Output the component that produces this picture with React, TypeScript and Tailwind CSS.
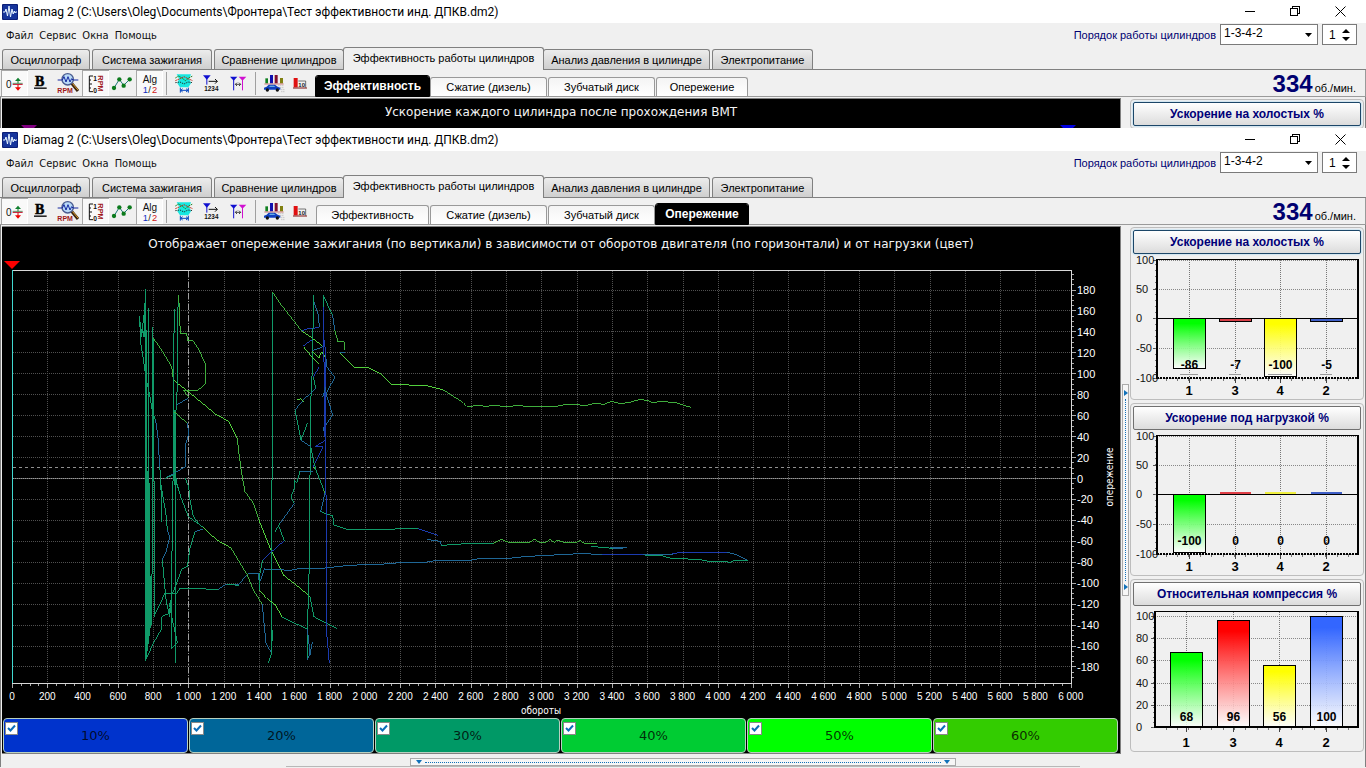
import React, { useId } from "react";

const UI = "font-['Liberation_Sans',sans-serif]";

/* ---------- window chrome ---------- */

function AppIcon() {
  return (
    <svg className="size-4 shrink-0" viewBox="0 0 16 16" aria-hidden="true">
      <rect width="16" height="16" rx="1" fill="#0c1f78" />
      <rect x="1" y="1" width="14" height="14" rx="1" fill="#16349b" />
      <path d="M1 8h2l1-3 1.500 7L7 2l1.500 11L10 5l1.200 5L12.300 7l.7 2 .5-1H15" fill="none" stroke="#e6f4ff" strokeWidth="1" />
    </svg>
  );
}

function TitleBar() {
  return (
    <header className="flex h-[23px] items-center bg-white pl-[2px]">
      <AppIcon />
      <h1 className="ml-[5px] flex-1 truncate font-['Roboto','Open_Sans',sans-serif] text-[12px] leading-[18px] text-black">
        Diamag 2 (C:\Users\Oleg\Documents\Фронтера\Тест эффективности инд. ДПКВ.dm2)
      </h1>
      <div className="flex pr-[3px] text-black">
        <button aria-label="Свернуть" className="flex h-5 w-[45px] items-center justify-center">
          <svg className="size-[11px]" viewBox="0 0 11 11" stroke="currentColor" fill="none" shapeRendering="crispEdges"><path d="M0 5.500H10" /></svg>
        </button>
        <button aria-label="Восстановить" className="flex h-5 w-[45px] items-center justify-center">
          <svg className="size-[11px]" viewBox="0 0 11 11" stroke="currentColor" fill="none" shapeRendering="crispEdges"><path d="M.5 2.500h7v7h-7zM2.500 2.500v-2h7v7h-2" /></svg>
        </button>
        <button aria-label="Закрыть" className="flex h-5 w-[45px] items-center justify-center">
          <svg className="size-[11px]" viewBox="0 0 11 11" stroke="currentColor" fill="none"><path d="M.5.5l10 10M10.500.5l-10 10" /></svg>
        </button>
      </div>
    </header>
  );
}

function MenuRow() {
  const id = useId();
  return (
    <div className="flex h-[24px] items-start pt-px">
      <nav className="flex flex-1 gap-[6px] pl-[6px] pt-[3px] font-['DejaVu_Sans_Condensed','DejaVu_Sans',sans-serif] text-[11px] leading-[18px] text-[#111]">
        {["Файл", "Сервис", "Окна", "Помощь"].map((m) => (
          <button key={m}>{m}</button>
        ))}
      </nav>
      <label htmlFor={id} className="mr-[4px] pt-[2px] text-[11px] leading-[18px] text-[#000070]">Порядок работы цилиндров</label>
      <div className="relative mr-[4px]">
        <select id={id} className="block h-[21px] w-[98px] appearance-none border border-[#7a7a7a] bg-white pb-[2px] pl-[3px] text-[12px] leading-[17px] text-black">
          <option>1-3-4-2</option>
        </select>
        <svg className="pointer-events-none absolute right-[6px] top-[9px] h-[4px] w-[7px]" viewBox="0 0 7 4" aria-hidden="true"><path d="M0 0h7L3.500 4z" /></svg>
      </div>
      <div className="mr-[9px] flex h-[21px] w-[35px] items-center border border-[#7a7a7a] bg-white">
        <input aria-label="Номер цилиндра" defaultValue="1" className="w-[17px] bg-white pl-[6px] text-[12px] text-black" />
        <div className="flex flex-col gap-[4px] pl-[2px]">
          <button aria-label="Больше" className="block"><svg className="h-[4px] w-[8px]" viewBox="0 0 8 4"><path d="M0 4h8L4 0z" /></svg></button>
          <button aria-label="Меньше" className="block"><svg className="h-[4px] w-[8px]" viewBox="0 0 8 4"><path d="M0 0h8L4 4z" /></svg></button>
        </div>
      </div>
    </div>
  );
}

const mainTabs = [
  { label: "Осциллограф", w: "w-[88px]" },
  { label: "Система зажигания", w: "w-[120px]" },
  { label: "Сравнение цилиндров", w: "w-[130px]" },
  { label: "Эффективность работы цилиндров", w: "w-[201px]" },
  { label: "Анализ давления в цилиндре", w: "w-[167px]" },
  { label: "Электропитание", w: "w-[101px]" },
];

function MainTabs() {
  return (
    <div className="flex h-[23px] items-end border-b border-[#808080] pl-[2px]">
      {mainTabs.map((t, i) =>
        i === 3 ? (
          <button key={t.label} className={`${t.w} -ml-[3px] -mr-px -mb-px h-[23px] shrink-0 whitespace-nowrap rounded-t-[3px] border border-b-0 border-[#808080] bg-[#f0f0f0] pb-[2px] text-[11px] leading-[16px] text-black`}>
            {t.label}
          </button>
        ) : (
          <button key={t.label} className={`${t.w} mr-[2px] h-[20px] shrink-0 whitespace-nowrap rounded-t-[3px] border border-b-0 border-[#808080] bg-linear-to-b from-[#ececec] to-[#cfcfcf] text-[11px] leading-[16px] text-black`}>
            {t.label}
          </button>
        )
      )}
    </div>
  );
}

/* ---------- toolbar ---------- */

function Tool({ label, x, pressed, children }: { label: string; x: number; pressed?: boolean; children: React.ReactNode }) {
  return (
    <button aria-label={label} className={`h-[26px] w-[27px] shrink-0 ${pressed ? "bg-[#f9f9f9] shadow-[inset_1px_1px_0_#a8a8a8,inset_-1px_-1px_0_#ffffff]" : ""}`}>
      <svg className="block h-[26px] w-[27px]" viewBox={`${x} 210 81 78`} fill="none" fontFamily="Liberation Sans, sans-serif">
        {children}
      </svg>
    </button>
  );
}

function Separator() {
  return <span className="mx-[3px] h-[23px] w-px shrink-0 bg-[#a0a0a0]" />;
}

function Toolbar() {
  return (
    <div className="flex items-center pl-px">
      <Tool label="Ноль" x={3} pressed>
        <text x="18" y="265" fontSize="30" fill="#111">0</text>
        <path d="M38 253H68" stroke="#c00020" strokeWidth="3" />
        <path d="M38 250H68" stroke="#207030" strokeWidth="2" />
        <path d="M54 250V240" stroke="#108030" strokeWidth="3" /><path d="M45 243L54 233L63 243Z" fill="#108030" />
        <path d="M54 254V264" stroke="#d00" strokeWidth="3" /><path d="M45 262L54 272L63 262Z" fill="#f00000" />
      </Tool>
      <Tool label="Жирные линии" x={84}>
        <text x="105" y="257" fontSize="42" fontWeight="bold" fontFamily="Liberation Serif, serif" fill="#000" stroke="#000" strokeWidth="1.500">B</text>
        <path d="M102 264.500H140" stroke="#000" strokeWidth="4" />
      </Tool>
      <Tool label="Обороты" x={165}>
        <path d="M215 250L234 273" stroke="#3a2410" strokeWidth="9" /><path d="M217 250L234 270" stroke="#e0a030" strokeWidth="3" />
        <circle cx="203" cy="238" r="17" fill="#b9daf8" stroke="#4a5c90" strokeWidth="4" />
        <path d="M173 240H187L192 230L198 246L204 230L210 246L215 236L219 240H235" stroke="#1428a0" strokeWidth="3" />
        <text x="172" y="279" fontSize="21" fontWeight="bold" fill="#a01818">RPM</text>
      </Tool>
      <Tool label="Шкала оборотов" x={246} pressed>
        <path d="M279 228H268V275H279M268 240H273M268 252H276M268 264H273" stroke="#111" strokeWidth="3" />
        <text x="280" y="242" fontSize="20" fontWeight="bold" fill="#111">1</text><text x="280" y="278" fontSize="20" fontWeight="bold" fill="#111">0</text>
        <text transform="translate(294 226) rotate(90)" fontSize="22" fontWeight="bold" fill="#a01820">RPM</text>
      </Tool>
      <Tool label="Точки" x={327}>
        <path d="M342 264L358 238L371 256L389 238" stroke="#207878" strokeWidth="3" />
        {[[342, 264], [358, 238], [371, 257], [389, 238]].map(([a, b]) => <circle key={a} cx={a} cy={b} r="6.500" fill="#0b7a1c" />)}
      </Tool>
      <Tool label="Алгоритм" x={408} pressed>
        <text x="428" y="249" fontSize="30" fill="#111">Alg</text>
        <text x="428" y="279" fontSize="28" fill="#1030c0">1</text><text x="445" y="279" fontSize="28" fill="#111">/</text><text x="456" y="279" fontSize="28" fill="#d01818">2</text>
      </Tool>
      <Separator />
      <span className="w-px" />
      <Tool label="Диапазон" x={513}>
        <path d="M530 223H573L568 236L573 250L565 262H540L532 250L537 236Z" fill="#18e8e0" />
        <path d="M526 234L536 228L546 234L556 242L566 234L578 228" stroke="#208020" strokeWidth="3" strokeDasharray="5 2" />
        <path d="M526 242L540 236L552 230L564 236L578 242" stroke="#c03020" strokeWidth="3" strokeDasharray="5 2" />
        <path d="M526 248L540 246L552 252L564 246L578 248" stroke="#203030" strokeWidth="3" strokeDasharray="4 3" />
        <path d="M541 263V278M565 263V278M541 271H565M548 266L542 271L548 276M558 266L564 271L558 276" stroke="#0848c0" strokeWidth="3" />
      </Tool>
      <Tool label="Порядок цилиндров" x={594}>
        <path d="M609 226H632L620.500 239Z" fill="#1010d0" /><path d="M620.500 232V254" stroke="#1010d0" strokeWidth="3" />
        <path d="M626 244H652M645 237L652 244L645 251" stroke="#111" strokeWidth="3" />
        <text x="613" y="273" fontSize="19" fontWeight="bold" fill="#111">1234</text>
      </Tool>
      <Tool label="Интервал" x={675}>
        <path d="M690 230H712L701 242Z" fill="#1010d0" /><path d="M701 236V271" stroke="#1010d0" strokeWidth="3" />
        <path d="M716 230H739L727.500 242Z" fill="#d010d0" /><path d="M727.500 236V271" stroke="#d010d0" strokeWidth="3" />
        <path d="M706 253H722M711 248L706 253L711 258M717 248L722 253L717 258" stroke="#222" strokeWidth="2.500" />
      </Tool>
      <Separator />
      <Tool label="Под нагрузкой" x={774}>
        <path d="M793 235h8v15h-8z" fill="#108020" /><path d="M807 225h9v25h-9z" fill="#1010b0" /><path d="M821 225h9v25h-9z" fill="#801030" /><path d="M837 234h9v16h-9z" fill="#808010" />
        <path d="M790 252H848" stroke="#c04040" strokeWidth="2" />
        <path d="M789 269V263L797 260L803 254H822L830 260L838 263V269Z" fill="#1040c0" /><path d="M804 260L807 257H819L823 260Z" fill="#80d0f0" />
        <circle cx="799" cy="270" r="5" fill="#111" /><circle cx="829" cy="270" r="5" fill="#111" />
        <path d="M832 257H850M838 263H850M841 269H850M841 275H850" stroke="#999" strokeWidth="2" strokeDasharray="3 3" />
      </Tool>
      <Tool label="Десятка" x={855}>
        <path d="M878 234h12v28h-12z" fill="#e01010" /><path d="M876 264H918" stroke="#801010" strokeWidth="3" />
        <path d="M892 243H914V263" stroke="#333" strokeWidth="2" />
        <text x="892" y="261" fontSize="18" fontWeight="bold" fill="#222">10</text>
      </Tool>
    </div>
  );
}

const subTabs = [
  { label: "Эффективность", w: "w-[113px]" },
  { label: "Сжатие (дизель)", w: "w-[117px]" },
  { label: "Зубчатый диск", w: "w-[107px]" },
  { label: "Опережение", w: "w-[92px]" },
];

function ToolRow({ active }: { active: number }) {
  return (
    <div className="flex h-[27px] items-stretch border-b border-r border-[#9a9a9a]">
      <Toolbar />
      <div className="flex flex-1 items-end pl-[3px]">
        {subTabs.map((t, i) =>
          i === active ? (
            <button key={t.label} className={`${t.w} mr-px h-[20px] shrink-0 whitespace-nowrap rounded-t-[2px] bg-black text-[12px] font-bold leading-[18px] text-white outline-1 outline-black`}>{t.label}</button>
          ) : (
            <button key={t.label} className={`${t.w} mr-px h-[19px] shrink-0 whitespace-nowrap rounded-t-[3px] border border-b-0 border-[#999] bg-linear-to-b from-[#f4f4f4] to-white text-[11px] leading-[16px] text-black`}>{t.label}</button>
          )
        )}
      </div>
      <p className="flex items-baseline gap-[2px] pr-[9px] text-black">
        <strong className="text-[24px] leading-[28px] text-[#000070]">334</strong>
        <span className="text-[11px]">об./мин.</span>
      </p>
    </div>
  );
}

/* ---------- side bar charts ---------- */

type Bar = { x: number; w: number; top: number; bottom: number; color: string; value: string; cyl: string; thin?: boolean };
type Side = { title: string; left: number; oy: number; top: number; bottom: number; ticks: [string, number][]; zero: number; bars: Bar[]; minor: number };

const G = "#00ff00", R = "#ff0000", Y = "#ffff00", B = "#3366ff";

const idle: Side = {
  title: "Ускорение на холостых %", left: 1157, oy: 254, top: 260, bottom: 378, zero: 318, minor: 6,
  ticks: [["100", 260], ["50", 289], ["0", 318], ["-50", 348], ["-100", 378]],
  bars: [
    { x: 1189, w: 32, top: 318, bottom: 368, color: G, value: "-86", cyl: "1" },
    { x: 1235, w: 32, top: 318, bottom: 321, color: "#d84048", value: "-7", cyl: "3", thin: true },
    { x: 1280, w: 32, top: 318, bottom: 376, color: Y, value: "-100", cyl: "4" },
    { x: 1326, w: 32, top: 318, bottom: 321, color: "#4060c8", value: "-5", cyl: "2", thin: true },
  ],
};
const load: Side = {
  ...idle, title: "Ускорение под нагрузкой %",
  bars: [
    { x: 1189, w: 32, top: 318, bottom: 376, color: G, value: "-100", cyl: "1" },
    { x: 1235, w: 31, top: 318, bottom: 318, color: "#e04048", value: "0", cyl: "3" },
    { x: 1280, w: 31, top: 318, bottom: 318, color: "#f0f040", value: "0", cyl: "4" },
    { x: 1326, w: 31, top: 318, bottom: 318, color: "#4060c8", value: "0", cyl: "2" },
  ],
};
const compression: Side = {
  title: "Относительная компрессия %", left: 1155, oy: 606, top: 612, bottom: 727, zero: 727, minor: 5,
  ticks: [["100", 616], ["80", 638], ["60", 660], ["40", 683], ["20", 705], ["0", 727]],
  bars: [
    { x: 1186, w: 32, top: 652, bottom: 727, color: G, value: "68", cyl: "1" },
    { x: 1233, w: 32, top: 620, bottom: 727, color: R, value: "96", cyl: "3" },
    { x: 1279, w: 32, top: 665, bottom: 727, color: Y, value: "56", cyl: "4" },
    { x: 1326, w: 32, top: 616, bottom: 727, color: B, value: "100", cyl: "2" },
  ],
};

function SideGroup({ title, focused, children }: { title: string; focused?: boolean; children?: React.ReactNode }) {
  return (
    <section className="rounded-[4px] border border-[#bdbdbd] p-[2px]">
      <button className={`block h-[24px] w-full rounded-[2px] border bg-linear-to-b from-white to-[#dcdcdc] text-[12px] font-bold leading-[20px] text-[#000078] ${focused ? "border-[#1c4668] shadow-[0_0_2px_#80c8f0]" : "border-[#707070]"}`}>
        {title}
      </button>
      {children}
    </section>
  );
}

function SideChart({ d, focused }: { d: Side; focused?: boolean }) {
  const gid = useId();
  const minors: number[] = [];
  for (let y = d.bottom; y > d.top; y -= d.minor) minors.push(y);
  return (
    <SideGroup title={d.title} focused={focused}>
      <svg className="block w-full" viewBox={`1133 ${d.oy} 228 143`} fontFamily="Liberation Sans, sans-serif">
        <g shapeRendering="crispEdges" fill="none">
          {d.ticks.map(([l, y]) => (
            <React.Fragment key={l}>
              <path d={`M${d.left} ${y + 0.5}H1358`} stroke="#888" strokeDasharray="1 1" />
              <path d={`M${d.left - 4} ${y + 0.5}H${d.left}`} stroke="#555" />
            </React.Fragment>
          ))}
          {minors.map((y) => <path key={y} d={`M${d.left - 2} ${y + 0.5}H${d.left}`} stroke="#777" />)}
          {d.bars.map((b) => (
            <path key={b.x} d={`M${b.x + 0.5} ${d.top}V${d.bottom}`} stroke="#777" strokeDasharray="1 1" />
          ))}
          {Array.from({ length: 17 }, (_, i) => 1166 + i * 11.4).map((x) => <path key={x} d={`M${x} ${d.bottom}v3`} stroke="#777" />)}
          <path d={`M${d.left} ${d.zero + 0.5}H1358`} stroke="#000" />
          {d.bars.map((b, i) => (
            <React.Fragment key={b.x}>
              <linearGradient id={`${gid}${i}`} x1="0" y1="0" x2="0" y2="1">
                <stop offset="0.1" stopColor={b.color} /><stop offset="1" stopColor="#ffffff" stopOpacity="0.85" />
              </linearGradient>
              {b.bottom > b.top ? (
                <rect x={b.x - 15.5} y={b.top + 0.5} width={b.w} height={b.bottom - b.top} fill={b.thin ? b.color : `url(#${gid}${i})`} stroke="#000" />
              ) : (
                <rect x={b.x - 15} y={b.top - 2} width={b.w} height="2" fill={b.color} />
              )}
              <path d={`M${b.x + 0.5} ${d.bottom}v5`} stroke="#444" />
            </React.Fragment>
          ))}
          <path d={`M${d.left - 0.5} ${d.top - 0.5}H1358`} stroke="#000" />
          <path d={`M${d.left} ${d.top - 1}V${d.bottom + 1}M1358 ${d.top - 1}V${d.bottom + 1}`} stroke="#000" strokeWidth="2" />
          <path d={`M${d.left} ${d.bottom}H1358`} stroke="#000" strokeWidth="2" strokeDasharray={d.minor === 6 ? "2 1" : undefined} />
        </g>
        {d.ticks.map(([l, y]) => <text key={l} x="1136" y={y + 4} fontSize="11" fill="#111">{l}</text>)}
        {d.bars.map((b) => (
          <g key={b.x} fontWeight="bold" textAnchor="middle" fill="#000">
            <text x={b.x + 0.5} y={d.oy + 115} fontSize="12">{b.value}</text>
            <text x={b.x} y={d.oy + 141} fontSize="13">{b.cyl}</text>
            {d === idle && <path d={`M${b.x - b.value.length * 3} 374.500h${b.value.length * 6}`} stroke="#999" shapeRendering="crispEdges" />}
          </g>
        ))}
      </svg>
    </SideGroup>
  );
}

/* ---------- main chart ---------- */

const T = "#109a68", GR = "#3fae3c", LG = "#52d03c", BL = "#1f6796", DB = "#1b3bb0";

/* Trace points are stored in thirds of a chart unit, origin at (110, 270). */
const traces: [string, string][] = [
  [T, "88,138 90,170 95,200 100,150 104,120 107,58 107,1172"],
  [T, "92,200 97,170 102,200 104,130 105,200"],
  [T, "92,155 91,215 100,265 107,320 120,380 128,430 137,450"],
  [BL, "137,450 146,520 148,590"],
  [T, "148,590 152,610 155,755"],
  [T, "110,180 110,1150"], [T, "114,610 114,1125"], [T, "117,115 117,700 122,1060 113,1130 107,1172"],
  [T, "128,172 128,610 125,1065"], [T, "131,205 131,600 134,700 134,1040"],
  [GR, "130,205 155,240 185,290 190,330"],
  [LG, "190,330 235,365 320,435 355,453 382,507"],
  [GR, "382,507 388,560 395,610 405,665 430,700 447,750"],
  [LG, "447,750 485,845 520,915 565,950 600,980"],
  [T, "600,980 612,1040 640,1055 680,1075"],
  [T, "193,118 190,330 190,600 187,700 184,1138"],
  [T, "206,75 202,150 202,350 198,420 198,600 197,1178"],
  [T, "194,420 194,640 198,660"],
  [GR, "206,75 211,192 230,190 233,212 248,212 265,235 287,285 287,340 265,360 220,361 235,380"],
  [BL, "235,384 197,407"], [GR, "192,425 232,460"],
  [BL, "232,460 236,490 228,520 226,590 165,625"],
  [T, "165,625 190,615 205,655"], [T, "152,640 165,715 168,735 172,780"],
  [BL, "172,780 179,800 170,840 157,870"], [T, "157,870 167,980 172,1010 180,1040"],
  [T, "192,575 200,640 212,680 235,740 280,772"],
  [LG, "280,772 320,810 362,833"], [GR, "362,833 412,915 430,960 457,1003"],
  [BL, "457,1003 462,1060 468,1120 485,1150"], [T, "487,1080 485,1150 475,1180"],
  [T, "226,625 236,650 240,690 250,740 270,765"],
  [BL, "278,778 255,785"], [T, "255,785 240,835 232,890 215,897 200,940 185,975 178,1030 155,1040 153,1080 130,1120 107,1170"],
  [T, "178,1000 185,1040 202,1117 185,1135"],
  [T, "134,1035 165,970 200,970 210,955 325,958"],
  [BL, "325,958 345,945 385,945 410,915"], [T, "350,943 388,946"],
  [BL, "413,910 445,910 448,940 463,897 540,901 570,895 620,897 700,888 770,883 810,883 870,878 930,879 970,873 1080,871 1110,865 1210,864 1240,860 1350,854 1410,851 1510,854"],
  [DB, "1475,854 1600,853 1690,852 1710,847 1850,847"], [BL, "1600,855 1650,853 1690,853"], [BL, "1850,847 1880,854 1900,865 1915,871"],
  [T, "1605,857 1625,855 1650,856 1680,864 1730,866 1740,870 1770,869 1800,875 1820,873 1830,876 1845,874 1860,877 1870,872 1900,873 1915,870"],
  [GR, "610,590 618,600 632,635 645,670"], [BL, "645,670 632,725"],
  [T, "632,725 668,738 672,765 715,780 810,780 870,776 925,776"], [DB, "925,776 950,785 985,796"],
  [BL, "950,808 990,814 994,826"],
  [T, "994,826 1030,824 1075,820 1150,820"],
  [GR, "1150,820 1175,808 1195,817 1260,817 1273,808 1290,817 1307,817 1320,808 1332,817 1345,810 1360,817 1398,817 1410,811 1420,819 1460,821"],
  [T, "1443,829 1475,832 1510,835"], [BL, "1500,832 1550,832 1510,835 1540,835"],
  [LG, "690,248 735,293 775,293 810,310 845,344 870,344 950,347 1000,360"],
  [GR, "1000,360 1060,398 1070,409 1110,407 1130,409 1155,406 1190,411 1220,406 1250,409 1340,409 1370,403 1430,406 1455,400 1482,403 1505,394 1530,401 1560,397 1590,388 1610,391 1630,398 1655,394 1700,399 1742,412"],
  [T, "488,66 488,570 485,660 485,1150"],
  [GR, "488,66 510,100 575,183"], [LG, "575,183 605,203 640,230"],
  [DB, "575,183 585,178 628,172"], [BL, "628,172 625,135 612,95 610,75"],
  [T, "610,75 608,280 602,400 602,570 598,660 598,900 595,940 592,1170"],
  [BL, "640,230 605,243"], [DB, "580,228 605,210"], [LG, "580,230 605,260 628,283"],
  [LG, "605,243 627,263 635,245 648,265"],
  [BL, "648,265 650,290 675,322 648,370 668,435 640,475 648,510"],
  [DB, "648,510 615,530 640,530 610,590"], [BL, "610,604 570,604"],
  [T, "570,604 560,640 553,630 555,650 543,680 553,700"],
  [BL, "553,700 510,760"], [T, "510,760 495,785"], [T, "505,765 523,812"],
  [DB, "523,812 485,845 458,870"], [T, "458,870 450,910 447,960"],
  [LG, "447,960 470,985 497,1005 515,1040"], [T, "515,1040 555,1060 592,1077"],
  [BL, "592,1077 600,1150 592,1170"], [BL, "607,1115 600,1155"],
  [DB, "628,290 610,320"], [T, "610,320 617,355"], [BL, "617,355 582,388 555,420"],
  [LG, "560,388 572,387 580,395"],
  [T, "555,420 573,510 593,458"], [BL, "573,510 602,530"], [T, "602,530 612,580 620,605 642,660"],
  [T, "640,75 640,110"],
  [DB, "640,110 641,210 644,400 646,600 650,750 651,1100 658,1180"],
  [DB, "645,210 646,660"],
  [T, "640,78 668,135"], [BL, "668,135 674,180"], [GR, "674,180 684,215 702,215 704,240"], [BL, "704,247 690,248"],
  [BL, "648,350 638,380"],
];

const range = (n: number) => Array.from({ length: n }, (_, i) => i);
const px = (rpm: number) => 12.5 + rpm * 0.17645;
const py = (deg: number) => 478.5 - deg * 1.047;
const spaced = (n: number) => (n >= 1000 ? `${Math.floor(n / 1000)} ${String(n % 1000).padStart(3, "0")}` : String(n));

function AdvanceChart() {
  return (
    <svg className="block w-full" viewBox="2 257 1118 461" fill="none" fontFamily="Liberation Sans, sans-serif" fontSize="11" role="img" aria-label="Опережение зажигания">
      <path d="M4 261H20L12 269Z" fill="#ff0000" />
      <g shapeRendering="crispEdges">
        {range(29).map((i) => <path key={i} d={`M${px((i + 1) * 200)} 271V683`} stroke="#505050" strokeDasharray="1 1" />)}
        {range(19).map((i) => <path key={i} d={`M13 ${py(180 - i * 20)}H1071`} stroke="#505050" strokeDasharray="1 1" />)}
        <path d="M13 478.500H1071" stroke="#5a5a5a" />
        <path d="M13 478.500H1071" stroke="#9a9a9a" strokeDasharray="1 1" />
        <path d="M13 467.500H1071" stroke="#909090" strokeDasharray="3 3" />
        <path d="M188.500 271V683" stroke="#a0a0a0" strokeDasharray="6 2 1 2" />
        <path d="M12 270.500H1071.500V683.500H12" stroke="#d8d8d8" />
        <path d="M12.500 270V683" stroke="#40d8d0" />
        {range(121).map((i) => <path key={i} d={`M${px(i * 50)} 684v${i % 4 ? 2 : 4}`} stroke="#aaa" />)}
        {range(78).map((i) => 195 - i * 5).map((v) => <path key={v} d={`M1072 ${py(v)}h${v % 20 ? 2 : 4}`} stroke="#aaa" />)}
      </g>
      <g transform="translate(110 270) scale(0.33333)" strokeWidth="3" shapeRendering="crispEdges">
        <path d="M105 330L112 340V600L119 640V720L122 1060L113 1130L107 1172Z" fill={T} />
        {traces.map(([c, p]) => <polyline key={p} points={p} stroke={c} />)}
      </g>
      <g fill="#fff">
        {range(31).map((i) => <text key={i} x={px(i * 200) - 0.5} y="700" fontSize="10" textAnchor="middle">{spaced(i * 200)}</text>)}
        {range(19).map((i) => <text key={i} x="1077" y={py(180 - i * 20) + 4}>{180 - i * 20}</text>)}
        <g fontFamily="DejaVu Sans Condensed, DejaVu Sans, sans-serif" fontSize="10" textAnchor="middle">
          <text x="541" y="714">обороты</text>
          <text transform="translate(1113 477) rotate(-90)">опережение</text>
        </g>
      </g>
    </svg>
  );
}

const legend = [
  ["10%", "bg-[#0033cc]"], ["20%", "bg-[#006699]"], ["30%", "bg-[#009966]"],
  ["40%", "bg-[#00cc33]"], ["50%", "bg-[#00ff00]"], ["60%", "bg-[#33cc00]"],
];

function Legend() {
  return (
    <div className="grid grid-cols-6 gap-px pl-px pr-[2px]">
      {legend.map(([l, c]) => (
        <label key={l} className={`${c} relative flex h-[35px] items-center justify-center rounded-[4px] border border-[#b8d0c0] font-['DejaVu_Sans',sans-serif] text-[13px] text-black/80`}>
          <input type="checkbox" defaultChecked className="peer absolute left-px top-[3px] size-[13px] appearance-none border border-[#888] bg-white" />
          <svg className="pointer-events-none absolute left-[3px] top-[5px] hidden size-[9px] peer-checked:block" viewBox="0 0 9 9" fill="none" stroke="#0c6cb8" strokeWidth="2"><path d="M1 4L3.500 6.500L8 1.500" /></svg>
          {l}
        </label>
      ))}
    </div>
  );
}

/* ---------- windows ---------- */

function SideSplitter() {
  return (
    <div className="flex h-[212px] w-[7px] flex-col items-center justify-between border border-[#aaa] bg-[#f6f6f6] py-[5px]">
      <svg className="h-[6px] w-[4px]" viewBox="0 0 4 6"><path d="M0 0L4 3L0 6z" fill="#1070b8" /></svg>
      <span className="my-[3px] flex-1 border-l border-dotted border-[#1070b8]" />
      <svg className="h-[6px] w-[4px]" viewBox="0 0 4 6"><path d="M0 0L4 3L0 6z" fill="#1070b8" /></svg>
    </div>
  );
}

function AppWindow({ active, children, side, splitter }: { active: number; children: React.ReactNode; side: React.ReactNode; splitter?: boolean }) {
  return (
    <div className={`${UI} flex flex-col bg-[#f0f0f0]`}>
      <TitleBar />
      <MenuRow />
      <MainTabs />
      <ToolRow active={active} />
      <div className="flex border-l border-r border-[#808080] pl-px pt-px">
        <main className="flex min-w-0 flex-1 flex-col border border-l-0 border-[#808080] bg-black">{children}</main>
        <div className="flex w-[9px] flex-col items-center justify-center">{splitter && <SideSplitter />}</div>
        <aside className="flex w-[235px] shrink-0 flex-col gap-[3px] pr-px pt-px">{side}</aside>
      </div>
    </div>
  );
}

const titleClass = "text-center font-['DejaVu_Sans',sans-serif] text-[12px] text-[#f4f4f4]";

export default function App() {
  return (
    <div className="h-screen overflow-hidden bg-[#f0f0f0]">
      <div className="h-32 overflow-hidden">
        <AppWindow active={0} side={<SideGroup title={idle.title} focused />}>
          <h2 className={`${titleClass} pt-[3px] leading-[20px]`}>Ускорение каждого цилиндра после прохождения ВМТ</h2>
          <div className="flex justify-between pl-[19px] pr-[44px] pt-[3px]">
            <svg className="h-[8px] w-[16px]" viewBox="0 0 16 8"><path d="M0 0h16L8 8z" fill="#800080" /></svg>
            <svg className="h-[8px] w-[16px]" viewBox="0 0 16 8"><path d="M0 0h16L8 8z" fill="#0000e0" /></svg>
          </div>
        </AppWindow>
      </div>
      <AppWindow
        active={3}
        splitter
        side={
          <>
            <SideChart d={idle} focused />
            <SideChart d={load} />
            <SideChart d={compression} />
          </>
        }
      >
        <h2 className={`${titleClass} pt-[7px] leading-[20px]`}>
          Отображает опережение зажигания (по вертикали) в зависимости от оборотов двигателя (по горизонтали) и от нагрузки (цвет)
        </h2>
        <div className="pt-[3px]"><AdvanceChart /></div>
        <Legend />
      </AppWindow>
      <footer className="flex flex-col border-l border-r border-[#808080] pt-[4px]">
        <div className="ml-[409px] flex h-[8px] w-[546px] items-center justify-between border border-[#aaa] bg-[#f6f6f6] px-[5px]">
          <svg className="h-[4px] w-[6px]" viewBox="0 0 6 4"><path d="M0 0h6L3 4z" fill="#1070b8" /></svg>
          <span className="mx-[3px] flex-1 border-t border-dotted border-[#1070b8]" />
          <svg className="h-[4px] w-[6px]" viewBox="0 0 6 4"><path d="M0 0h6L3 4z" fill="#1070b8" /></svg>
        </div>
        <div className="ml-[285px] mr-[285px] border-t border-[#b8b8b8]" />
      </footer>
    </div>
  );
}
